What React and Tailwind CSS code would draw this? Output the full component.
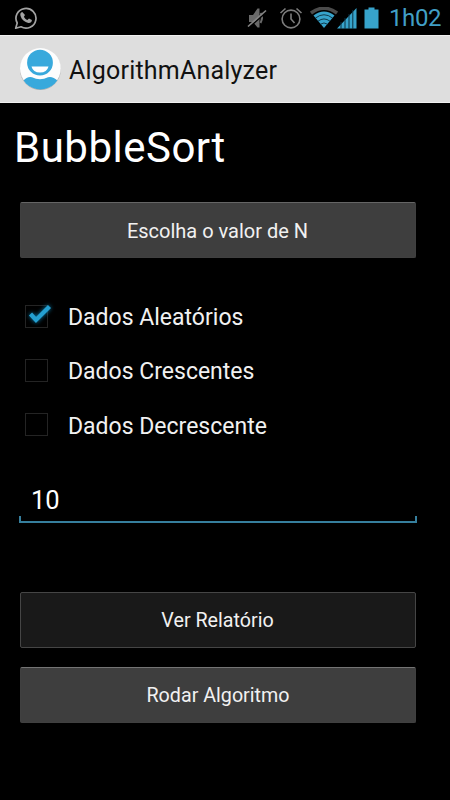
import React, { useState } from "react";

function StatusBar() {
  return (
    <div className="flex h-[35px] items-center bg-black pl-[14px] pr-[9px]">
      <svg width="24" height="24" viewBox="0 0 24 24" fill="none" className="text-[#a3a3a3]">
        <path d="M1.7 22.2 3.2 17A10 9.8 0 1 1 7 20.8Z" stroke="currentColor" strokeWidth="1.7" strokeLinejoin="round" />
        <path d="M8.3 6c-1.8.4-2.3 2-1.8 3.8 1 3.8 4.3 6.500 7.900 7.200 1.800.3 3.600-.9 3.500-2.900l-2.900-1.500-1.600 1.500c-1.600-.7-2.800-1.900-3.500-3.400l1.100-1.600Z" fill="currentColor" />
      </svg>
      <div className="flex-1" />
      <svg width="20" height="22" viewBox="0 0 20 22" className="mr-[12px] shrink-0">
        <path d="M2 8h4l4.500-6.500h2v19h-2L6 15H2Z" fill="#6a6a6a" />
        <path d="M13.500 6q3 4 0 10" stroke="#6a6a6a" strokeWidth="2" fill="none" />
        <path d="M2 20.500 19.500 5" stroke="#000" strokeWidth="1.500" />
        <path d="M1 19.500 19 3.500" stroke="#858585" strokeWidth="1.600" />
      </svg>
      <svg width="24" height="24" viewBox="0 0 24 24" fill="none" stroke="#7c7c7c" strokeWidth="1.600" className="mr-[7px] shrink-0">
        <circle cx="12" cy="13" r="8.900" />
        <path d="M12 7.500V13l3.500 4M1.500 7 6.500 2.500M17.500 2.500l5 4.500" />
      </svg>
      <svg width="28" height="22" viewBox="0 0 28 22" fill="none" className="-mr-[1px] shrink-0">
        <path d="M1 6Q14-3.500 27 6" stroke="#4b4b4b" strokeWidth="3.500" />
        <path d="M3.500 8.500Q14 .5 24.500 8.500L14 21Z" fill="#37a3cb" />
        <path d="M5.500 11Q14 4.500 22.500 11M8 14.200q6-4.500 12 0M10.500 17.200q3.500-2.500 7 0" stroke="#0b2c3b" strokeWidth=".9" />
      </svg>
      <svg width="20" height="22" viewBox="0 0 20 22" className="mr-[7px] shrink-0">
        <path d="M0 21.500 19.500 1v20.500Z" fill="#37a3cb" />
        <path d="M4 15v7M8 11v11M12 7v15M15.800 3v19" stroke="#0b3142" strokeWidth="1" />
      </svg>
      <svg width="15" height="22" viewBox="0 0 15 22" className="mr-[10px] shrink-0">
        <path d="M.5 2.500h4V.5h6v2h4v19H.5Z" fill="#37a3cb" />
      </svg>
      <span className="w-[52px] whitespace-nowrap pt-[2px] text-[24px] leading-[33px] tracking-[-0.4px] text-[#419fc6]">1h02</span>
    </div>
  );
}

function AppIcon() {
  return (
    <svg width="42" height="44" viewBox="0 0 42 44" className="shrink-0">
      <defs>
        <clipPath id="disc"><circle cx="20.400" cy="22" r="20.400" /></clipPath>
      </defs>
      <circle cx="20.400" cy="22.700" r="20.400" fill="#b3b3b3" />
      <circle cx="20.400" cy="21.500" r="20.400" fill="#fdfdfd" />
      <g clipPath="url(#disc)" fill="#38a9dc">
        <path d="M3 34Q7.500 29 12 30.300q8 4 16 0Q32.500 29 38 34V44H3Z" />
      </g>
      <circle cx="20" cy="15.700" r="12.900" fill="#38a9dc" />
      <path d="M11.500 19.500h17q-1.500 6-8.500 6t-8.500-6Z" fill="#fff" />
    </svg>
  );
}

function CheckRow({ label, initial }) {
  const [checked, setChecked] = useState(initial);
  return (
    <label className="flex h-[54.300px] items-center">
      <input type="checkbox" className="sr-only" checked={checked} onChange={() => setChecked(!checked)} />
      <span className="mr-5 flex h-[23px] w-[23px] shrink-0 border border-[#242424]">
        {checked && (
          <svg width="23" height="23" viewBox="0 0 23 23" fill="none" className="shrink-0 overflow-visible drop-shadow-[0_0_2px_#087cad]">
            <path d="m4.500 8 5.500 6L23.500.5" stroke="#249fd0" strokeWidth="4.300" />
          </svg>
        )}
      </span>
      <span className="whitespace-nowrap pt-[4px] text-[23px] leading-[30px] text-[#f1f1f1]">{label}</span>
    </label>
  );
}

export default function App() {
  return (
    <div className="flex h-[800px] w-[450px] flex-col overflow-hidden bg-black font-['Roboto',sans-serif]">
      <StatusBar />
      <header className="flex h-[68px] items-center border-y border-[#f0f0f0] bg-[#dedede] pl-[20px]">
        <AppIcon />
        <span className="ml-[7px] mt-[3px] whitespace-nowrap text-[25px] leading-[32px] tracking-[0.2px] text-[#111]">AlgorithmAnalyzer</span>
      </header>
      <main className="flex flex-col pl-[20px] pr-[34px]">
        <h1 className="-ml-[6px] mt-[20px] whitespace-nowrap text-[42px] leading-[50px] tracking-[0.5px] text-white">BubbleSort</h1>
        <button className="mt-[29px] h-[56px] rounded-[2px] border border-[#404040] border-t-[#656565] bg-[#3e3e3e] pr-[1px] pt-[2px] text-[20px] text-[#f1f1f1]">Escolha o valor de N</button>
        <div className="mt-[31px] flex flex-col pl-[5px]">
          <CheckRow label="Dados Aleatórios" initial />
          <CheckRow label="Dados Crescentes" initial={false} />
          <CheckRow label="Dados Decrescente" initial={false} />
        </div>
        <div className="-mx-[1px] mt-[28px] flex h-[43px] flex-col">
          <input aria-label="N" defaultValue="10" className="h-[36px] bg-transparent pl-[12px] pt-[5px] text-[25.500px] text-white outline-none" />
          <div className="h-[7px] shrink-0 border-x-2 border-b-2 border-[#367f9d]" />
        </div>
        <button className="mt-[69px] h-[56px] rounded-[2px] border border-[#454545] bg-[#191919] pr-[1px] pt-[2px] text-[19.700px] text-[#f1f1f1]">Ver Relatório</button>
        <button className="mt-[19px] h-[56px] rounded-[2px] border border-[#404040] border-t-[#747474] bg-[#3e3e3e] pt-[2px] text-[19.700px] text-[#f1f1f1]">Rodar Algoritmo</button>
      </main>
    </div>
  );
}
